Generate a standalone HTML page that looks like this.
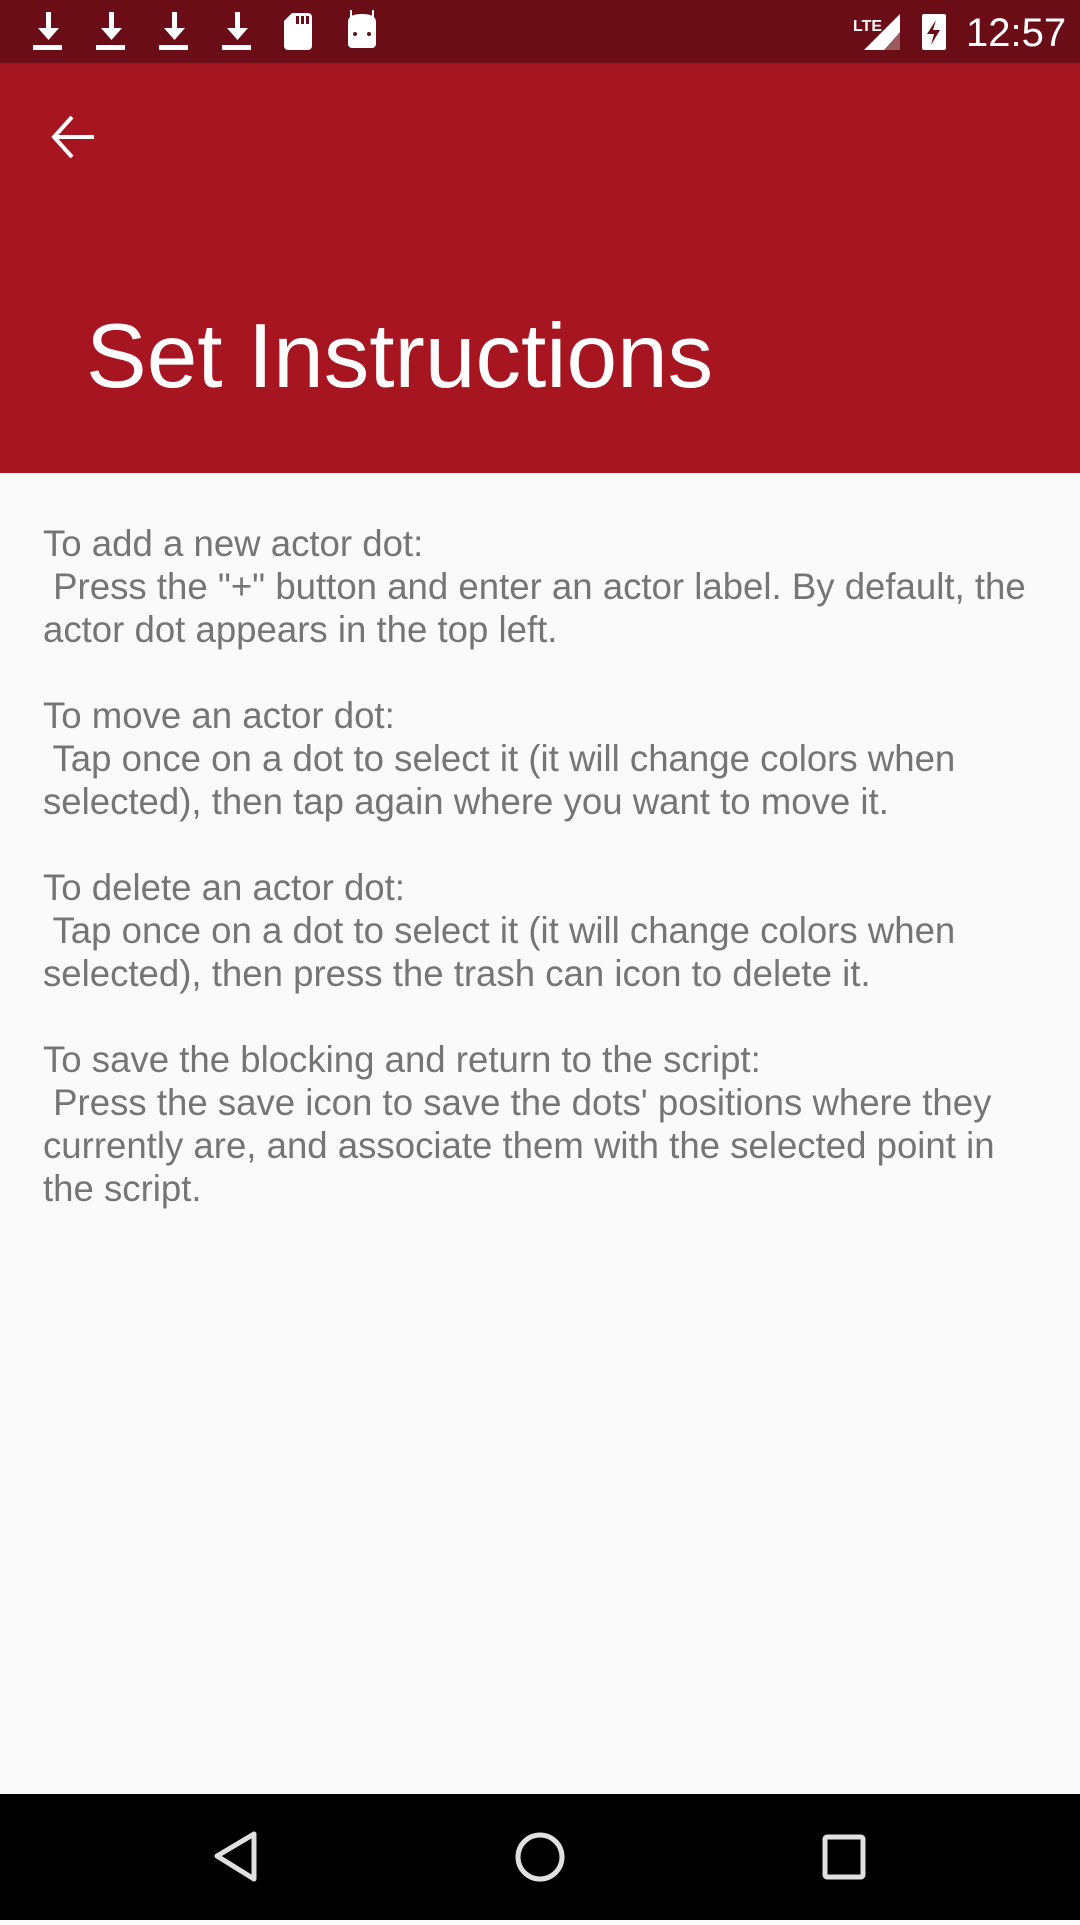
<!DOCTYPE html>
<html><head><meta charset="utf-8"><style>
html,body{margin:0;padding:0;}
body{width:1080px;height:1920px;position:relative;background:#fafafa;font-family:"Liberation Sans",sans-serif;overflow:hidden;}
#sb{position:absolute;left:0;top:0;width:1080px;height:63px;background:#6a0d16;}
#tb{position:absolute;left:0;top:63px;width:1080px;height:410px;background:#a71521;}
#title{position:absolute;left:86px;top:244px;font-size:91px;color:#fff;line-height:100px;white-space:nowrap;}
#txt{position:absolute;left:43px;top:522px;font-size:36.6px;line-height:43px;color:#757575;white-space:pre;}
#nav{position:absolute;left:0;top:1794px;width:1080px;height:126px;background:#000;}
#time{position:absolute;left:966px;top:11px;font-size:40px;color:#fff;}
</style></head><body>
<div id="sb">
<svg width="1080" height="63" style="position:absolute;left:0;top:0">
<g fill="#fff">
<g id="d"><rect x="46" y="12" width="5" height="20"/><polygon points="38,28 59,28 48.5,40"/><rect x="33" y="45" width="29" height="5"/></g>
<use href="#d" x="63"/><use href="#d" x="126"/><use href="#d" x="189"/>
<path d="M292 13 h16 a4 4 0 0 1 4 4 v29 a4 4 0 0 1 -4 4 h-20 a4 4 0 0 1 -4 -4 v-25 z"/>
<path d="M348 22 q0 -8 14 -8 q14 0 14 8 v22 a4 4 0 0 1 -4 4 h-20 a4 4 0 0 1 -4 -4 z"/>
<rect x="350" y="10" width="2" height="8"/><rect x="372" y="10" width="2" height="8"/>
<polygon points="864,50 900,50 900,14"/>
<rect x="922" y="14" width="24" height="36" rx="2"/>
</g>
<g fill="#6a0d16"><rect x="296" y="16" width="3" height="8"/><rect x="301" y="16" width="3" height="8"/><rect x="306" y="16" width="3" height="8"/>
<circle cx="355" cy="34" r="2"/><circle cx="369" cy="34" r="2"/>
<polygon points="936,20 927,34 934,34 931,45 940,30 933,30"/></g>
<polygon points="884,50 900,50 900,32" fill="#9a5a60"/>
<text x="853" y="31" font-size="16" fill="#fff" font-family="Liberation Sans" font-weight="bold">LTE</text>
</svg>
<div id="time">12:57</div>
</div>
<div id="tb">
<svg width="60" height="60" style="position:absolute;left:44px;top:44px" viewBox="0 0 60 60">
<path d="M50 30 H10 M28 10 L10 30 L28 50" stroke="#fff" stroke-width="4" fill="none"/>
</svg>
<div id="title">Set Instructions</div>
</div>
<div id="txt">To add a new actor dot:
 Press the "+" button and enter an actor label. By default, the
actor dot appears in the top left.

To move an actor dot:
 Tap once on a dot to select it (it will change colors when
selected), then tap again where you want to move it.

To delete an actor dot:
 Tap once on a dot to select it (it will change colors when
selected), then press the trash can icon to delete it.

To save the blocking and return to the script:
 Press the save icon to save the dots' positions where they
currently are, and associate them with the selected point in
the script.</div>
<div id="nav">
<svg width="1080" height="126">
<path d="M254 40 L217 62 L254 85 Z" fill="none" stroke="#e0e0e0" stroke-width="5" stroke-linejoin="round"/>
<circle cx="540" cy="63" r="22" fill="none" stroke="#e0e0e0" stroke-width="5"/>
<rect x="825" y="43" width="38" height="40" rx="2" fill="none" stroke="#e0e0e0" stroke-width="5"/>
</svg>
</div>
</body></html>
